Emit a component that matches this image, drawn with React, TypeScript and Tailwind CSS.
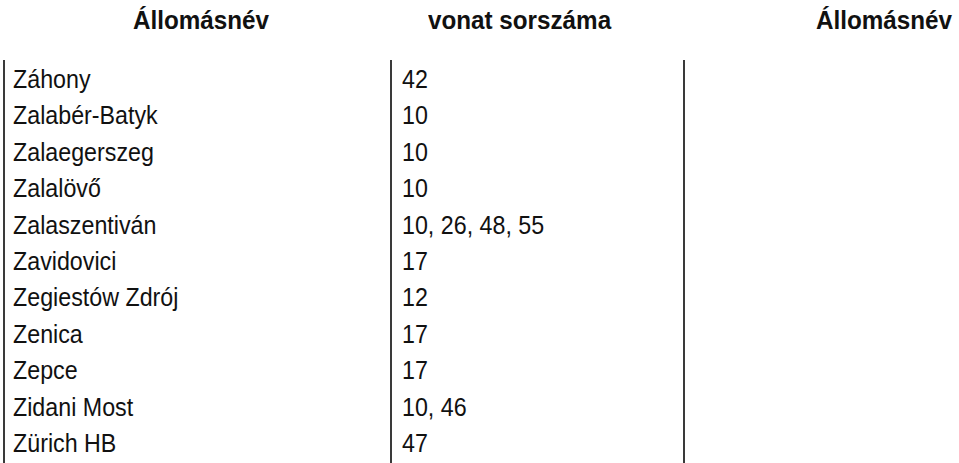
import React from "react";

const rows = [
  { name: "Záhony", trains: "42" },
  { name: "Zalabér-Batyk", trains: "10" },
  { name: "Zalaegerszeg", trains: "10" },
  { name: "Zalalövő", trains: "10" },
  { name: "Zalaszentiván", trains: "10, 26, 48, 55" },
  { name: "Zavidovici", trains: "17" },
  { name: "Zegiestów Zdrój", trains: "12" },
  { name: "Zenica", trains: "17" },
  { name: "Zepce", trains: "17" },
  { name: "Zidani Most", trains: "10, 46" },
  { name: "Zürich HB", trains: "47" },
];

export default function App() {
  return (
    <div className="w-[959px] h-[463px] overflow-hidden bg-white text-[#111] font-['Liberation_Sans',Arial,sans-serif]">
      <div className="flex h-[60px] pt-[8px] text-[25.5px] font-bold leading-[25.5px]">
        <div className="w-[390px] pl-[133px]">
          <div className="origin-left scale-x-[0.95] whitespace-nowrap">Állomásnév</div>
        </div>
        <div className="w-[293px] pl-[43px]">
          <div className="origin-left scale-x-[0.95] whitespace-nowrap">vonat sorszáma</div>
        </div>
        <div className="flex-1 pl-[142px]">
          <div className="origin-left scale-x-[0.95] whitespace-nowrap">Állomásnév</div>
        </div>
      </div>
      <div className="flex ml-[3px] h-[403px] text-[25px] leading-[36.4px]">
        <div className="w-[387px] border-l-2 border-[#3a3a3a] pl-[8px] pt-[1px]">
          {rows.map((r) => (
            <div key={r.name} className="origin-left scale-x-[0.93] whitespace-nowrap">
              {r.name}
            </div>
          ))}
        </div>
        <div className="w-[293px] border-l-2 border-[#3a3a3a] pl-[10px] pt-[1px]">
          {rows.map((r) => (
            <div key={r.name} className="origin-left scale-x-[0.93] whitespace-nowrap">
              {r.trains}
            </div>
          ))}
        </div>
        <div className="flex-1 border-l-2 border-[#3a3a3a]" />
      </div>
    </div>
  );
}
